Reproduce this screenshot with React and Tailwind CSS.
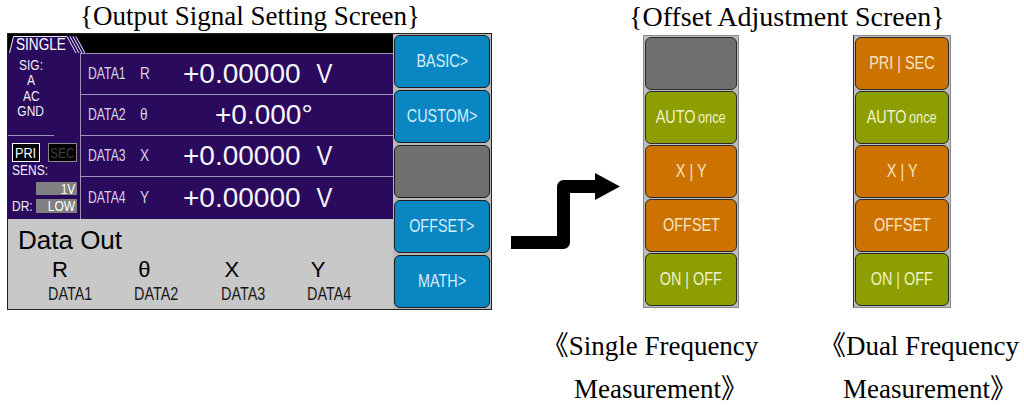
const ARIAL = "font-['Liberation_Sans',Arial,sans-serif]";
const SERIF = "font-['Liberation_Serif','Noto_Sans_CJK_SC',serif]";

function Tab() {
  return (
    <div className="relative w-[76px] h-[18px] ml-[1px]">
      <svg className="absolute inset-0" width="76" height="18" viewBox="0 0 76 18">
        <polygon points="0,18 4,1 66,1 76,18" fill="#2a0a5c" />
        <polyline points="0.5,18 4.5,1.5 58,1.5" fill="none" stroke="#e8e8f0" strokeWidth="1" />
        {[0, 1, 2, 3].map((i) => (
          <line key={i} x1={58 + i * 3} y1="1.5" x2={67 + i * 3} y2="18" stroke="#e8e8f0" strokeWidth="1" />
        ))}
      </svg>
      <span className={`${ARIAL} absolute left-[7px] top-[1px] inline-block origin-left scale-x-[0.85] text-[16px] leading-[17px] text-white`}>
        SINGLE
      </span>
    </div>
  );
}

function DataRow({ label, sym, value, unit, offset, last }) {
  return (
    <div className={`flex items-center h-[41px] ${last ? '' : 'border-b border-[#9c94b4]'}`}>
      <span className="ml-[7px] w-[52px]">
        <span className={`${ARIAL} inline-block origin-left scale-x-[0.72] text-[17px] text-[#d6d2e6]`}>{label}</span>
      </span>
      <span className="w-[43px]">
        <span className={`${ARIAL} inline-block origin-left scale-x-[0.8] text-[17px] text-[#d6d2e6]`}>{sym}</span>
      </span>
      <span className={`${ARIAL} text-[28px] leading-none text-[#f6f4fc] ${offset ? 'ml-[32px]' : 'w-[132px]'}`}>{value}</span>
      {unit && <span className={`${ARIAL} inline-block scale-x-[0.85] text-[28px] leading-none text-[#f6f4fc]`}>{unit}</span>}
    </div>
  );
}

function OutItem({ sym, label }) {
  return (
    <div className="w-[90px] flex flex-col items-start">
      <span className={`${ARIAL} ml-[4px] mt-[6px] text-[22px] leading-[22px] text-black`}>{sym}</span>
      <span className={`${ARIAL} mt-[4px] inline-block origin-left scale-x-[0.8] text-[18px] leading-[18px] text-[#1a1a1a]`}>{label}</span>
    </div>
  );
}

function SideButton({ children, gray }) {
  return (
    <div
      className={`flex-1 rounded-[6px] border border-[#1c1c1c] flex items-center justify-center ${
        gray ? 'bg-[#707070]' : 'bg-[#0a86c2]'
      }`}
    >
      <span className={`${ARIAL} inline-block scale-x-[0.8] text-[18px] text-[#d4efff]`}>{children}</span>
    </div>
  );
}

function OutputScreen() {
  return (
    <div className="w-[500px] flex flex-col">
      <h2 className={`${SERIF} h-[33px] text-[27px] leading-[33px] text-center text-black whitespace-nowrap`}>{'{Output Signal Setting Screen}'}</h2>
      <div className="ml-[7px] w-[485px] h-[277px] border border-[#222] flex">
        <div className="w-[385px] flex flex-col">
          {/* title bar */}
          <div className="h-[19px] bg-black flex items-end">
            <Tab />
          </div>

          {/* purple body */}
          <div className="h-[166px] flex bg-[#2a0a5c]">
            <div className="w-[73px] border-r border-[#9c94b4] flex flex-col">
              <div className={`${ARIAL} h-[83px] border-b border-[#9c94b4] flex flex-col items-center w-[46px] pt-[4px] text-[15px] leading-[15px] text-[#f0eef8]`}>
                <span className="inline-block scale-x-[0.8]">SIG:</span>
                <span className="inline-block scale-x-[0.8]">A</span>
                <span className="inline-block scale-x-[0.8] mt-[1px]">AC</span>
                <span className="inline-block scale-x-[0.8]">GND</span>
              </div>
              <div className={`${ARIAL} flex-1 flex flex-col pl-[4px] pt-[7px] text-[15px] text-[#f0eef8]`}>
                <div className="flex h-[19px] gap-[8px]">
                  <span className="w-[28px] border border-white bg-black flex items-center justify-center leading-none text-white">
                    <span className="inline-block scale-x-[0.85]">PRI</span>
                  </span>
                  <span className="w-[29px] border border-[#8a8a8a] bg-black flex items-center justify-center leading-none text-[#3c3c3c]">
                    <span className="inline-block scale-x-[0.8]">SEC</span>
                  </span>
                </div>
                <span className="h-[16px] leading-[16px] inline-block origin-left scale-x-[0.8]">SENS:</span>
                <div className="flex mt-[4px]">
                  <span className="ml-[24px] w-[41px] h-[13px] bg-[#808080] text-right pr-[2px] leading-[13px] text-white">
                    <span className="inline-block origin-right scale-x-[0.8]">1V</span>
                  </span>
                </div>
                <div className="flex mt-[4px] items-center">
                  <span className="w-[24px] leading-[14px]">
                    <span className="inline-block origin-left scale-x-[0.8]">DR:</span>
                  </span>
                  <span className="w-[41px] h-[14px] bg-[#808080] text-right pr-[2px] leading-[14px] text-white">
                    <span className="inline-block origin-right scale-x-[0.8]">LOW</span>
                  </span>
                </div>
              </div>
            </div>
            <div className="flex-1 flex flex-col border-t border-[#9c94b4]">
              <DataRow label="DATA1" sym="R" value="+0.00000" unit="V" />
              <DataRow label="DATA2" sym="θ" value="+0.000°" offset />
              <DataRow label="DATA3" sym="X" value="+0.00000" unit="V" />
              <DataRow label="DATA4" sym="Y" value="+0.00000" unit="V" last />
            </div>
          </div>

          {/* data out */}
          <div className="flex-1 bg-[#c8c8c8] flex flex-col pt-[8px]">
            <span className={`${ARIAL} pl-[10px] text-[26px] leading-[26px] text-black`}>Data Out</span>
            <div className="flex pl-[40px]">
              <OutItem sym="R" label="DATA1" />
              <OutItem sym="θ" label="DATA2" />
              <OutItem sym="X" label="DATA3" />
              <OutItem sym="Y" label="DATA4" />
            </div>
          </div>
        </div>

        <div className="flex-1 bg-[#b8b8b8] flex flex-col gap-[2px] p-[1px]">
          <SideButton>BASIC&gt;</SideButton>
          <SideButton>CUSTOM&gt;</SideButton>
          <SideButton gray />
          <SideButton>OFFSET&gt;</SideButton>
          <SideButton>MATH&gt;</SideButton>
        </div>
      </div>
    </div>
  );
}

const TONES = {
  gray: 'bg-[#6f6f6f] text-white',
  olive: 'bg-[#8c9e00] text-[#f2f2cc]',
  orange: 'bg-[#cc7200] text-[#fbe4c4]',
};

function OffsetColumn({ items, wide }) {
  return (
    <div
      className={`mt-[2px] h-[273px] bg-[#bdbdbd] border border-[#8a8a8a] p-[1px] flex flex-col gap-[1px] ${
        wide ? 'w-[98px] border-l-[#3a1a6a]' : 'w-[96px]'
      }`}
    >
      {items.map((it, i) => (
        <div
          key={i}
          className={`flex-1 rounded-[6px] border border-[#2a2a2a] flex items-center justify-center ${TONES[it.tone]}`}
        >
          <span className={`${ARIAL} inline-block scale-x-[0.8] text-[18px] whitespace-nowrap`}>{it.text}</span>
        </div>
      ))}
    </div>
  );
}

const autoOnce = (
  <>
    AUTO<span className="ml-[3px] text-[16px]">once</span>
  </>
);

function OffsetArea() {
  return (
    <div className="flex-1 flex flex-col">
      <h2 className={`${SERIF} h-[33px] pl-[129px] text-[28px] leading-[33px] text-black whitespace-nowrap`}>
        {'{Offset Adjustment Screen}'}
      </h2>
      <div className="flex">
        <svg width="143" height="278" viewBox="0 0 143 278">
          <polyline
            points="11,209.5 63.5,209.5 63.5,153.5 97,153.5"
            fill="none"
            stroke="#000"
            strokeWidth="13"
            strokeLinejoin="round"
          />
          <polygon points="95,140 120,153.5 95,167" fill="#000" />
        </svg>
        <OffsetColumn
          items={[
            { tone: 'gray', text: '' },
            { tone: 'olive', text: autoOnce },
            { tone: 'orange', text: 'X | Y' },
            { tone: 'orange', text: 'OFFSET' },
            { tone: 'olive', text: 'ON | OFF' },
          ]}
        />
        <div className="w-[114px]" />
        <OffsetColumn
          wide
          items={[
            { tone: 'orange', text: 'PRI | SEC' },
            { tone: 'olive', text: autoOnce },
            { tone: 'orange', text: 'X | Y' },
            { tone: 'orange', text: 'OFFSET' },
            { tone: 'olive', text: 'ON | OFF' },
          ]}
        />
      </div>
    </div>
  );
}

export default function App() {
  return (
    <div className="w-[1024px] h-[407px] bg-white flex flex-col overflow-hidden">
      <div className="flex h-[311px]">
        <OutputScreen />
        <OffsetArea />
      </div>
      <div className={`${SERIF} flex pt-[14px] text-[27px] leading-[43px] text-black`}>
        <div className="ml-[540px] w-[220px] text-center whitespace-nowrap">
          <div>《Single Frequency</div>
          <div className="pl-[22px]">Measurement》</div>
        </div>
        <div className="ml-[54px] w-[210px] text-center whitespace-nowrap">
          <div>《Dual Frequency</div>
          <div className="pl-[22px]">Measurement》</div>
        </div>
      </div>
    </div>
  );
}
